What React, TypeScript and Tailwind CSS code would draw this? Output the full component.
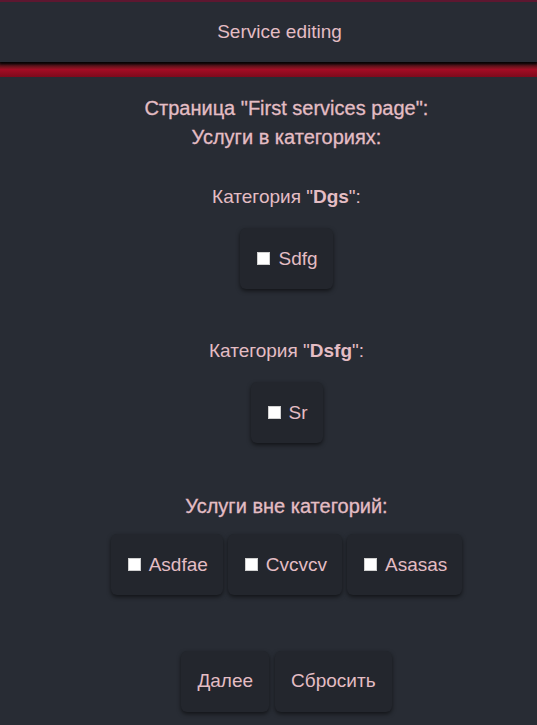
import React from "react";

const font = { fontFamily: '"Liberation Sans", Arial, sans-serif' };

function Box({ label }: { label: string }) {
  return (
    <div className="flex items-center rounded-md bg-[#23262d] pl-[17px] pr-[15px] h-[61px] shadow-[0_2px_4px_rgba(0,0,0,0.55)]">
      <span className="inline-block w-[13px] h-[13px] bg-white border border-[#d0d0d0] mr-[8px]" />
      <span className="text-[19px] leading-6">{label}</span>
    </div>
  );
}

function Btn({ label }: { label: string }) {
  return (
    <div className="flex items-center rounded-md bg-[#23262d] px-[16px] h-[61px] shadow-[0_2px_4px_rgba(0,0,0,0.55)] text-[19px]">
      {label}
    </div>
  );
}

export default function App() {
  return (
    <div style={font} className="min-h-[725px] bg-[#282c34] text-[#e4bdc4]">
      <div className="border-t-2 border-[#5e1730] bg-[#282c34] h-[62px] pl-[22px] flex items-center justify-center text-[19px] shadow-[0_2px_2px_rgba(0,0,0,0.8)] relative z-10">
        Service editing
      </div>
      <div className="h-[15px] bg-gradient-to-b from-[#1a0a0e] via-[#a30c24] to-[#7e0a1c]" />
      <div className="flex flex-col items-center pl-[36px]">
        <div className="mt-[19px] leading-6 text-[20px] [-webkit-text-stroke:0.3px_#e4bdc4]">
          Страница "First services page":
        </div>
        <div className="mt-[5px] leading-6 text-[20px] [-webkit-text-stroke:0.3px_#e4bdc4]">Услуги в категориях:</div>

        <div className="mt-[36px] leading-6 text-[19px]">
          Категория "<b>Dgs</b>":
        </div>
        <div className="mt-[19px] flex">
          <Box label="Sdfg" />
        </div>

        <div className="mt-[50px] leading-6 text-[19px]">
          Категория "<b>Dsfg</b>":
        </div>
        <div className="mt-[19px] flex">
          <Box label="Sr" />
        </div>

        <div className="mt-[51px] leading-6 text-[20px] [-webkit-text-stroke:0.3px_#e4bdc4]">Услуги вне категорий:</div>
        <div className="mt-[16px] flex gap-[5px]">
          <Box label="Asdfae" />
          <Box label="Cvcvcv" />
          <Box label="Asasas" />
        </div>

        <div className="mt-[56px] flex gap-[6px]">
          <Btn label="Далее" />
          <Btn label="Сбросить" />
        </div>
      </div>
    </div>
  );
}
